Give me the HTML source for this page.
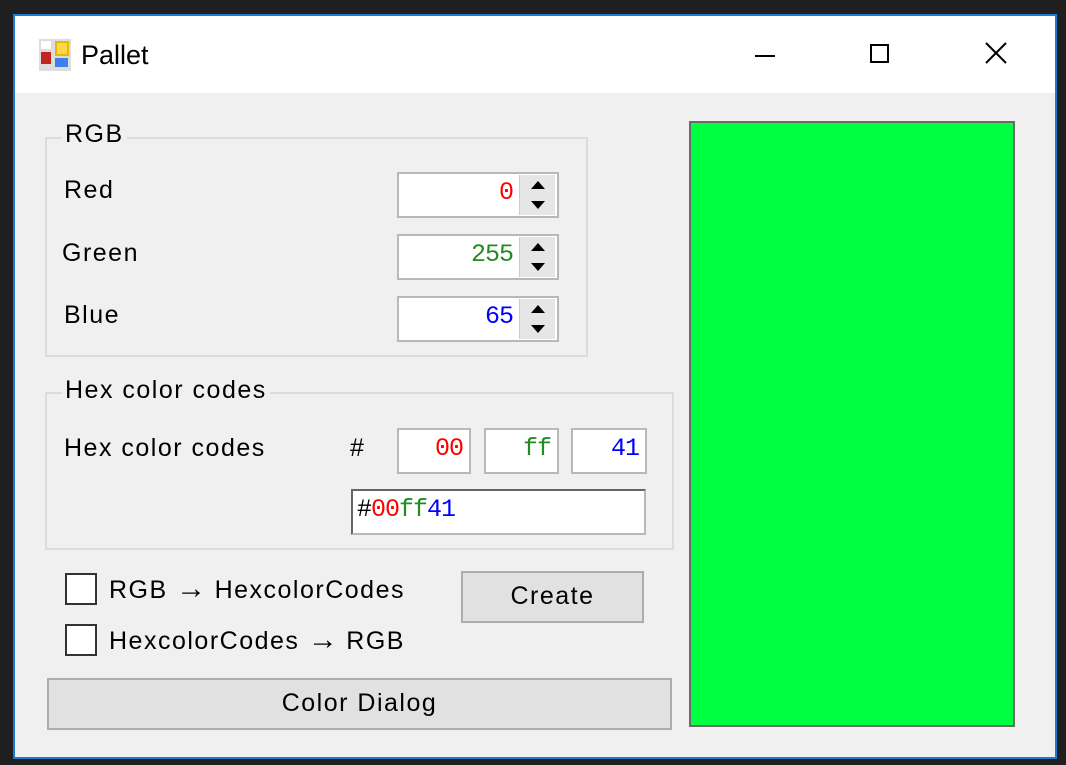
<!DOCTYPE html>
<html><head><meta charset="utf-8"><style>
*{box-sizing:border-box;margin:0;padding:0}
body{width:1066px;height:765px;background:#1f1f1f;position:relative;overflow:hidden;font-family:"Liberation Sans","Noto Sans CJK JP",sans-serif;color:#000}
.a{position:absolute}
.win{left:13px;top:14px;width:1044px;height:745px;border:2px solid #1a7ad4;background:#f0f0f0}
.in{left:-2px;top:-2px;width:1044px;height:745px}
.title{left:2px;top:2px;width:1040px;height:77px;background:#fff}
.t{font-size:25px;letter-spacing:1.5px}
.grp{border:2px solid #dcdcdc}
.lg{background:#f0f0f0;padding:0 3px;font-size:25px;letter-spacing:1.5px}
.inp{background:#fff;border:2px solid #b8b8b8;font-family:"Liberation Mono",monospace;font-size:25px;text-align:right;padding-right:6px;line-height:38px;letter-spacing:-1px}
.spin{width:36px;background:#e6e6e6;border-left:1px solid #ccc}
.btn{background:#e1e1e1;border:2px solid #adadad;font-size:25px;text-align:center;letter-spacing:1.5px}
.cb{width:32px;height:32px;background:#fff;border:2px solid #333}
.ar{font-size:30px;letter-spacing:0}
</style></head><body>
<div class="a win"><div class="a in">
 <div class="a title">
  <svg class="a" style="left:23px;top:22px" width="34" height="34" viewBox="0 0 34 34">
   <rect x="1" y="1" width="32" height="32" fill="#ddd"/><rect x="3" y="3" width="10" height="8" fill="#fff"/>
   <rect x="17" y="3" width="14" height="15" fill="#e8b800"/><rect x="19" y="5" width="10" height="11" fill="#ffd84a"/>
   <rect x="3" y="14" width="10" height="12" fill="#c0261f"/><rect x="17" y="20" width="13" height="9" fill="#3f7fe6"/>
  </svg>
  <div class="a" style="left:66px;top:24px;font-size:27px">Pallet</div>
  <div class="a" style="left:740px;top:39px;width:20px;height:2px;background:#000"></div>
  <div class="a" style="left:855px;top:28px;width:19px;height:19px;border:2px solid #000"></div>
  <svg class="a" style="left:970px;top:26px" width="22" height="22"><path d="M1 1L21 21M21 1L1 21" stroke="#000" stroke-width="2"/></svg>
 </div>
 <div class="a grp" style="left:32px;top:123px;width:543px;height:220px"></div>
 <div class="a lg" style="left:49px;top:106px">RGB</div>
 <div class="a t" style="left:51px;top:162px">Red</div>
 <div class="a t" style="left:49px;top:225px">Green</div>
 <div class="a t" style="left:51px;top:287px">Blue</div>
 <div class="a inp" style="left:384px;top:158px;width:162px;height:46px;color:#f00;padding-right:44px">0</div>
 <div class="a inp" style="left:384px;top:220px;width:162px;height:46px;color:#228b22;padding-right:44px">255</div>
 <div class="a inp" style="left:384px;top:282px;width:162px;height:46px;color:#00f;padding-right:44px">65</div>
 <div class="a spin" style="left:506px;top:161px;height:40px"><div style="margin:6px auto 0;width:0;border:7px solid transparent;border-bottom:8px solid #000;border-top:0"></div><div style="margin:12px auto 0;width:0;border:7px solid transparent;border-top:8px solid #000;border-bottom:0"></div></div>
 <div class="a spin" style="left:506px;top:223px;height:40px"><div style="margin:6px auto 0;width:0;border:7px solid transparent;border-bottom:8px solid #000;border-top:0"></div><div style="margin:12px auto 0;width:0;border:7px solid transparent;border-top:8px solid #000;border-bottom:0"></div></div>
 <div class="a spin" style="left:506px;top:285px;height:40px"><div style="margin:6px auto 0;width:0;border:7px solid transparent;border-bottom:8px solid #000;border-top:0"></div><div style="margin:12px auto 0;width:0;border:7px solid transparent;border-top:8px solid #000;border-bottom:0"></div></div>
 <div class="a grp" style="left:32px;top:378px;width:629px;height:158px"></div>
 <div class="a lg" style="left:49px;top:362px">Hex color codes</div>
 <div class="a t" style="left:51px;top:420px">Hex color codes</div>
 <div class="a t" style="left:337px;top:420px">#</div>
 <div class="a inp" style="left:384px;top:414px;width:74px;height:46px;color:#f00">00</div>
 <div class="a inp" style="left:471px;top:414px;width:75px;height:46px;color:#228b22">ff</div>
 <div class="a inp" style="left:558px;top:414px;width:76px;height:46px;color:#00f">41</div>
 <div class="a inp" style="left:338px;top:475px;width:295px;height:46px;text-align:left;padding-left:4px;border-top-color:#666;border-left-color:#666"><span>#</span><span style="color:#f00">00</span><span style="color:#228b22">ff</span><span style="color:#00f">41</span></div>
 <div class="a cb" style="left:52px;top:559px"></div>
 <div class="a t" style="left:96px;top:558px">RGB <span class="ar">→</span> HexcolorCodes</div>
 <div class="a cb" style="left:52px;top:610px"></div>
 <div class="a t" style="left:96px;top:609px">HexcolorCodes <span class="ar">→</span> RGB</div>
 <div class="a btn" style="left:448px;top:557px;width:183px;height:52px;line-height:46px">Create</div>
 <div class="a btn" style="left:34px;top:664px;width:625px;height:52px;line-height:46px">Color Dialog</div>
 <div class="a" style="left:676px;top:107px;width:326px;height:606px;background:#00ff41;border:2px solid #6a6a6a"></div>
</div></div>
</body></html>
